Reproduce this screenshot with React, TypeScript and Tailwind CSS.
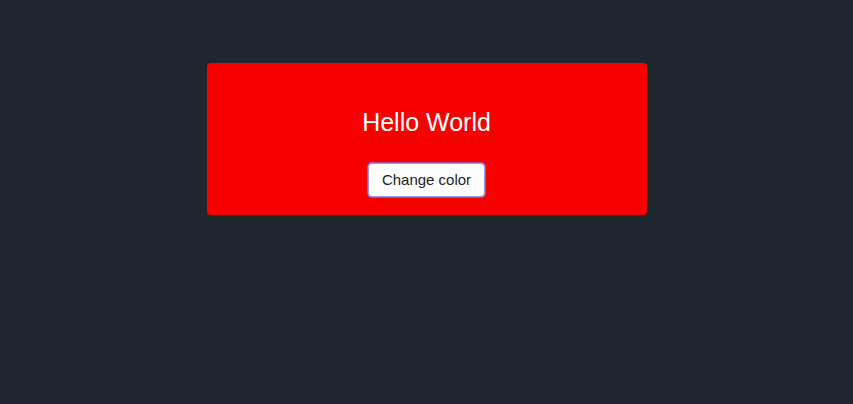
import React, { useState } from "react";

export default function App() {
  const colors = ["#f90000", "#2563eb", "#16a34a"];
  const [i, setI] = useState(0);
  return (
    <div className="w-[853px] h-[404px] bg-[#20262e] pt-[63px]" style={{ fontFamily: '"Liberation Sans", Arial, sans-serif' }}>
      <div
        className="mx-auto w-[440px] h-[152px] rounded-[4px] flex flex-col items-center pt-[46px]"
        style={{ backgroundColor: colors[i] }}
      >
        <h1 className="text-[25px] leading-[27px] text-white">Hello World</h1>
        <button
          onClick={() => setI((i + 1) % colors.length)}
          className="mt-[27px] h-[34px] px-[13px] bg-white text-[#222] text-[15px] rounded-[4px] border border-[#8c9ae8] shadow-[0_0_0_1px_#a05aa8]"
        >
          Change color
        </button>
      </div>
    </div>
  );
}
